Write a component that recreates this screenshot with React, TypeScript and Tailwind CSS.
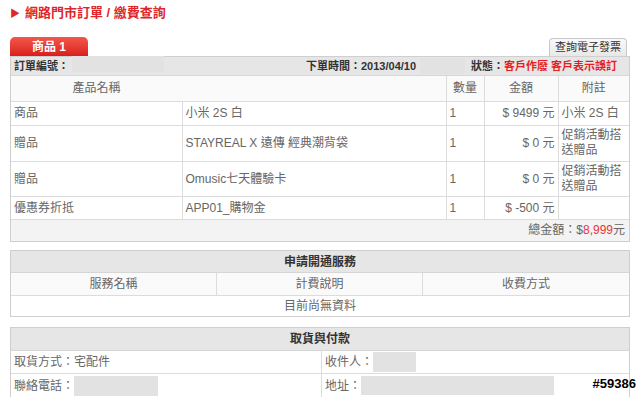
import React from 'react'

const font = { fontFamily: '"Liberation Sans", "Noto Sans CJK TC", sans-serif' }

const Blur = ({ w, h = 16 }: { w: number; h?: number }) => (
  <span className="inline-block shrink-0 bg-[#e2e2e2]" style={{ width: w, height: h }} />
)

const items = [
  { kind: '商品', name: '小米 2S 白', qty: '1', amt: '$ 9499 元', note: '小米 2S 白', h: 'h-[24px]' },
  { kind: '贈品', name: 'STAYREAL X 遠傳 經典潮背袋', qty: '1', amt: '$ 0 元', note: '促銷活動搭送贈品', h: 'h-[36px]' },
  { kind: '贈品', name: 'Omusic七天體驗卡', qty: '1', amt: '$ 0 元', note: '促銷活動搭送贈品', h: 'h-[35px]' },
  { kind: '優惠券折抵', name: 'APP01_購物金', qty: '1', amt: '$ -500 元', note: '', h: 'h-[23px]' },
]

const App: React.FC = () => {
  return (
    <div className="relative w-[640px] h-[397px] overflow-hidden bg-white text-[12px] text-[#666]" style={font}>
      {/* Title */}
      <div className="flex items-center h-[26px] pl-[10px] text-[13px] font-bold text-[#e0262a]">
        <span className="text-[10px] mr-[5px]">▶</span>
        <span>網路門市訂單 / 繳費查詢</span>
      </div>

      {/* Tabs */}
      <div className="flex justify-between items-end mt-[11px] px-[10px] h-[19px]">
        <div className="w-[78px] h-[19px] rounded-t-[5px] bg-gradient-to-b from-[#f4554a] to-[#d91c1c] text-white font-bold text-[12px] flex items-center justify-center">
          商品 1
        </div>
        <div className="w-[78px] h-[18px] mr-[3px] rounded-t-[4px] border border-b-0 border-[#c8c8c8] bg-gradient-to-b from-[#fafafa] to-[#e8e8e8] text-[#333] text-[11px] flex items-center justify-center whitespace-nowrap">
          查詢電子發票
        </div>
      </div>

      {/* Order box */}
      <div className="mx-[10px] border border-[#cfcfcf]">
        <div className="h-[19px] bg-[#e6e6e6] flex items-center px-[3px] font-bold text-[11px] text-[#333] whitespace-nowrap border-b border-[#d6d6d6]">
          <span>訂單編號：</span>
          <span className="ml-[3px]"><Blur w={92} /></span>
          <span className="ml-[142px]">下單時間：2013/04/10</span>
          <span className="ml-[4px] flex"><Blur w={45} /></span>
          <span className="ml-[6px]">狀態：</span>
          <span className="text-[#e51f1f]">客戶作廢 客戶表示誤訂</span>
        </div>
        <table className="w-full border-collapse table-fixed">
          <colgroup>
            <col className="w-[171px]" />
            <col className="w-[264px]" />
            <col className="w-[38px]" />
            <col className="w-[74px]" />
            <col />
          </colgroup>
          <thead>
            <tr className="h-[25px] bg-[#fafafa]">
              <th className="font-normal text-center border-b border-[#dcdcdc]">產品名稱</th>
              <th className="border-b border-[#dcdcdc]" />
              <th className="font-normal text-center border border-t-0 border-[#dcdcdc]">數量</th>
              <th className="font-normal text-center border border-t-0 border-[#dcdcdc]">金額</th>
              <th className="font-normal text-center border-b border-[#dcdcdc]">附註</th>
            </tr>
          </thead>
          <tbody>
            {items.map((it, i) => (
              <tr key={i} className={it.h}>
                <td className="px-[3px] border-b border-r border-[#dcdcdc]">{it.kind}</td>
                <td className="px-[3px] border-b border-r border-[#dcdcdc]">{it.name}</td>
                <td className="px-[3px] border-b border-r border-[#dcdcdc]">{it.qty}</td>
                <td className="px-[3px] text-right border-b border-r border-[#dcdcdc]">{it.amt}</td>
                <td className="px-[3px] leading-[15px] border-b border-[#dcdcdc]">{it.note}</td>
              </tr>
            ))}
            <tr className="h-[22px] bg-[#f3f3f3]">
              <td colSpan={5} className="text-right px-[4px]">
                總金額：$<span className="text-[#e33]">8,999</span>元
              </td>
            </tr>
          </tbody>
        </table>
      </div>

      {/* Service box */}
      <div className="mx-[10px] mt-[8px] border border-[#cfcfcf]">
        <div className="h-[22px] bg-[#e6e6e6] flex items-center justify-center font-bold text-[#333] border-b border-[#d6d6d6]">
          申請開通服務
        </div>
        <div className="grid grid-cols-3 h-[23px] bg-[#fafafa] border-b border-[#dcdcdc]">
          <div className="flex items-center justify-center border-r border-[#dcdcdc]">服務名稱</div>
          <div className="flex items-center justify-center border-r border-[#dcdcdc]">計費說明</div>
          <div className="flex items-center justify-center">收費方式</div>
        </div>
        <div className="h-[20px] flex items-center justify-center">目前尚無資料</div>
      </div>

      {/* Delivery box */}
      <div className="mx-[10px] mt-[10px] border border-[#cfcfcf]">
        <div className="h-[23px] bg-[#e6e6e6] flex items-center justify-center font-bold text-[#333] border-b border-[#d6d6d6]">
          取貨與付款
        </div>
        <div className="grid grid-cols-[311px_1fr] border-b border-[#dcdcdc] h-[23px]">
          <div className="flex items-center px-[3px] border-r border-[#dcdcdc]">取貨方式：宅配件</div>
          <div className="flex items-center px-[3px]">收件人：<Blur w={43} h={20} /></div>
        </div>
        <div className="grid grid-cols-[311px_1fr] h-[23px]">
          <div className="flex items-center px-[3px] border-r border-[#dcdcdc]">聯絡電話：<Blur w={84} h={20} /></div>
          <div className="flex items-center px-[3px]">地址：<Blur w={193} h={19} /></div>
        </div>
      </div>

      {/* Watermark */}
      <div
        className="absolute right-[4px] bottom-[4px] text-[13px] font-bold text-black"
        style={{ textShadow: '1px 0 #fff, -1px 0 #fff, 0 1px #fff, 0 -1px #fff' }}
      >
        #59386
      </div>
    </div>
  )
}

export default App
